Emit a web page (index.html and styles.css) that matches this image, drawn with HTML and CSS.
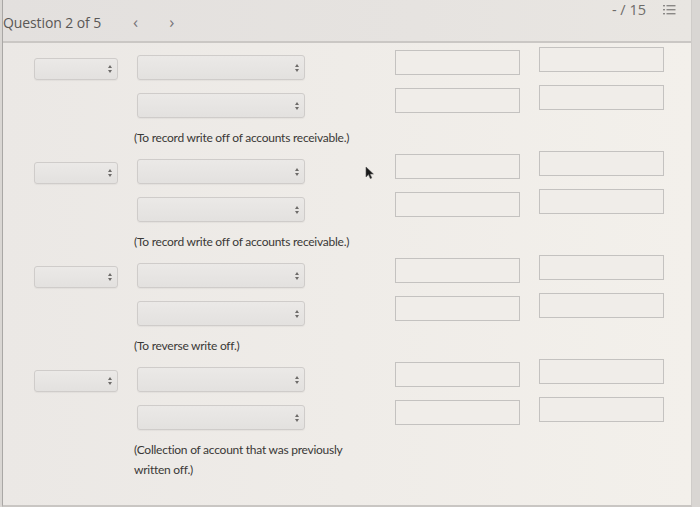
FILE: index.html
```html
<!DOCTYPE html>
<html>
<head>
<meta charset="utf-8">
<link rel="stylesheet" href="styles.css">
</head>
<body>
<div class="page">
  <header class="topbar">
    <div class="qnav">
      <span class="qtitle">Question 2 of 5</span>
      <span class="chev">&lsaquo;</span>
      <span class="chev chev-next">&rsaquo;</span>
    </div>
    <div class="score">
      <span class="pts">- / 15</span>
      <svg class="listicon" width="13" height="12" viewBox="0 0 13 12">
        <g fill="#8a8886">
          <rect x="0" y="1" width="2" height="1.4"/>
          <rect x="0" y="5" width="2" height="1.4"/>
          <rect x="0" y="9" width="2" height="1.4"/>
          <rect x="3.5" y="1" width="9" height="1.4"/>
          <rect x="3.5" y="5" width="9" height="1.4"/>
          <rect x="3.5" y="9" width="9" height="1.4"/>
        </g>
      </svg>
    </div>
  </header>
  <main class="content">
    <section class="entry">
      <div class="sel sel-date"><span class="arr"></span></div>
      <div class="sel sel-acct r1"><span class="arr"></span></div>
      <div class="tb c1 r1"></div>
      <div class="tb c2 r1"></div>
      <div class="sel sel-acct r2"><span class="arr"></span></div>
      <div class="tb c1 r2"></div>
      <div class="tb c2 r2"></div>
      <p class="note">(To record write off of accounts receivable.)</p>
    </section>
    <section class="entry">
      <div class="sel sel-date"><span class="arr"></span></div>
      <div class="sel sel-acct r1"><span class="arr"></span></div>
      <div class="tb c1 r1"></div>
      <div class="tb c2 r1"></div>
      <div class="sel sel-acct r2"><span class="arr"></span></div>
      <div class="tb c1 r2"></div>
      <div class="tb c2 r2"></div>
      <p class="note">(To record write off of accounts receivable.)</p>
    </section>
    <section class="entry">
      <div class="sel sel-date"><span class="arr"></span></div>
      <div class="sel sel-acct r1"><span class="arr"></span></div>
      <div class="tb c1 r1"></div>
      <div class="tb c2 r1"></div>
      <div class="sel sel-acct r2"><span class="arr"></span></div>
      <div class="tb c1 r2"></div>
      <div class="tb c2 r2"></div>
      <p class="note">(To reverse write off.)</p>
    </section>
    <section class="entry">
      <div class="sel sel-date"><span class="arr"></span></div>
      <div class="sel sel-acct r1"><span class="arr"></span></div>
      <div class="tb c1 r1"></div>
      <div class="tb c2 r1"></div>
      <div class="sel sel-acct r2"><span class="arr"></span></div>
      <div class="tb c1 r2"></div>
      <div class="tb c2 r2"></div>
      <p class="note note-wrap">(Collection of account that was previously written off.)</p>
    </section>
  </main>
  <svg class="cursor" width="10" height="14" viewBox="0 0 10 14">
    <path d="M1 1 L1 11 L3.5 8.6 L5.3 12.6 L6.8 11.9 L5 8 L8.4 8 Z" fill="#1a1a1a" stroke="#555" stroke-width="0.6"/>
  </svg>
</div>
</body>
</html>
```
FILE: styles.css
```css
html, body {
  margin: 0;
  padding: 0;
}
body {
  width: 700px;
  height: 507px;
  overflow: hidden;
  background: #d9d6d3;
  font-family: "Open Sans", "Liberation Sans", sans-serif;
}
.page {
  position: relative;
  width: 688px;
  height: 505px;
  margin-left: 2px;
  border-left: 1px solid #a9a7a5;
  border-right: 1px solid #cfccc9;
  border-bottom: 2px solid #c9c6c3;
  background: linear-gradient(90deg, #ebe8e5 0%, #efece8 50%, #f3f0eb 100%);
}
.topbar {
  height: 41px;
  border-bottom: 2px solid #cac7c4;
  background: linear-gradient(90deg, #e3e0de 0%, #e6e3e0 60%, #e9e6e2 100%);
  display: flex;
  justify-content: space-between;
  align-items: flex-start;
}
.qnav {
  display: flex;
  align-items: baseline;
  padding-top: 13px;
  color: #5a5856;
}
.qtitle {
  font-size: 14px;
  letter-spacing: -0.1px;
}
.chev {
  font-size: 17px;
  line-height: 14px;
  color: #77757a;
  margin-left: 32px;
}
.chev-next {
  margin-left: 31px;
}
.score {
  display: flex;
  align-items: flex-start;
  padding-top: 1px;
  padding-right: 15px;
  color: #6d6b69;
}
.pts {
  font-size: 14.5px;
  line-height: 18px;
}
.listicon {
  margin-left: 17px;
  margin-top: 3px;
}
.content {
  padding-top: 12px;
}
.entry {
  display: grid;
  grid-template-columns: 84px 168px 196px 125px;
  grid-template-rows: 25px 25px auto;
  column-gap: 19px;
  row-gap: 13px;
  margin-left: 31px;
  margin-bottom: 11px;
}
.sel {
  position: relative;
  box-sizing: border-box;
  border: 1px solid #cfccca;
  border-radius: 3px;
  background: linear-gradient(180deg, #ebe9e7 0%, #e3e1df 100%);
  box-shadow: 0 1px 1px rgba(0,0,0,0.04);
}
.sel-date {
  grid-column: 1;
  grid-row: 1;
  margin-top: 3px;
}
.sel-acct {
  grid-column: 2;
}
.r1 { grid-row: 1; }
.r2 { grid-row: 2; }
.arr {
  position: absolute;
  right: 7px;
  top: 50%;
  width: 0;
  height: 0;
}
.arr::before, .arr::after {
  content: "";
  position: absolute;
  left: -2.5px;
  border-left: 2.5px solid transparent;
  border-right: 2.5px solid transparent;
}
.arr::before {
  top: -4px;
  border-bottom: 3px solid #6d6b69;
}
.arr::after {
  top: 1px;
  border-top: 3px solid #6d6b69;
}
.tb {
  box-sizing: border-box;
  border: 1px solid #c4c2c0;
  background: #f0ede9;
  height: 25px;
  width: 125px;
}
.c1 {
  grid-column: 3;
  justify-self: end;
  margin-top: -5px;
}
.c2 {
  grid-column: 4;
  margin-top: -8px;
}
.note {
  grid-column: 2 / 5;
  grid-row: 3;
  margin: -3px 0 0 -3px;
  font-family: Lato, "Liberation Sans", sans-serif;
  font-size: 12px;
  line-height: 20px;
  color: #3a3836;
  letter-spacing: -0.25px;
}
.note-wrap {
  max-width: 222px;
}
.cursor {
  position: absolute;
  left: 362px;
  top: 166px;
}
```
